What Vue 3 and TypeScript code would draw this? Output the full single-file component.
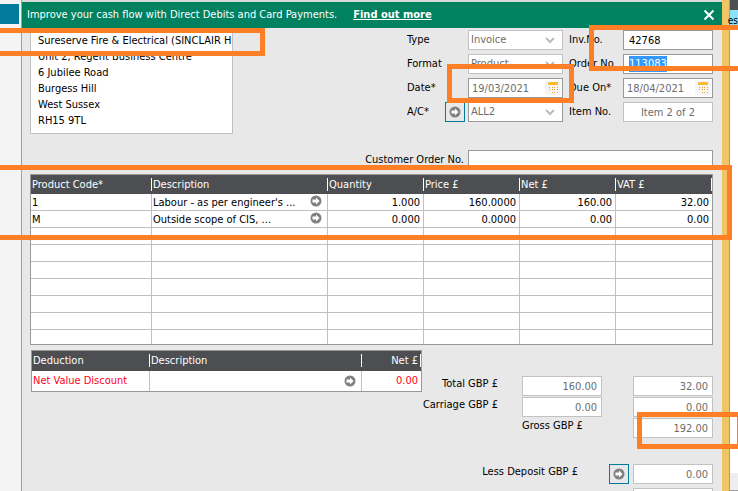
<script setup lang="ts">
import { ref } from 'vue'

interface LineItem {
  code: string
  description: string
  quantity: string
  price: string
  net: string
  vat: string
}

const company = ref('Sureserve Fire & Electrical (SINCLAIR HOUSE)')
const address = ref('Unit 2, Regent Business Centre\n6 Jubilee Road\nBurgess Hill\nWest Sussex\nRH15 9TL')
const docType = ref('Invoice')
const format = ref('Product')
const account = ref('ALL2')
const date = ref('19/03/2021')
const dueOn = ref('18/04/2021')
const invoiceNo = ref('42768')
const orderNo = ref('113083')
const customerOrderNo = ref('')

const lines: LineItem[] = [
  { code: '1', description: "Labour - as per engineer's ...", quantity: '1.000', price: '160.0000', net: '160.00', vat: '32.00' },
  { code: 'M', description: 'Outside scope of CIS, ...', quantity: '0.000', price: '0.0000', net: '0.00', vat: '0.00' },
]
const blankRows = 7
</script>

<template>
  <div class="window">
    <aside class="rail"><div class="rail-tab"></div></aside>

    <main class="invoice">
      <header class="banner">
        <span>Improve your cash flow with Direct Debits and Card Payments.</span>
        <a href="#">Find out more</a>
        <button class="close" type="button" aria-label="Close">
          <svg width="12" height="12" viewBox="0 0 12 12"><path d="M1.5 1.5 10.5 10.5M10.5 1.5 1.5 10.5" stroke="#fff" stroke-width="2" /></svg>
        </button>
      </header>

      <div class="body">
        <section class="details">
          <div class="address">
            <input v-model="company" aria-label="Customer name" />
            <textarea v-model="address" rows="5" aria-label="Customer address"></textarea>
          </div>

          <div class="fields">
            <label for="type">Type</label>
            <div class="pick">
              <select id="type" v-model="docType" class="box soft"><option>Invoice</option></select>
              <svg class="chevron" width="10" height="7" viewBox="0 0 10 7"><path d="M1 1 5 5 9 1" /></svg>
            </div>
            <label for="inv">Inv.No.</label>
            <input id="inv" v-model="invoiceNo" class="box" />

            <label for="format">Format</label>
            <div class="pick">
              <select id="format" v-model="format" class="box soft"><option>Product</option></select>
              <svg class="chevron" width="10" height="7" viewBox="0 0 10 7"><path d="M1 1 5 5 9 1" /></svg>
            </div>
            <label for="order">Order No</label>
            <div class="box order">
              <input id="order" v-model="orderNo" />
            </div>

            <label for="date">Date*</label>
            <div class="pick">
              <input id="date" v-model="date" class="box grey" />
              <svg class="calendar" width="16" height="14" viewBox="0 0 16 14">
                <rect width="16" height="14" fill="#f5f5f5" />
                <path d="M4 1h9v3H3V2z" fill="#fbbb2d" />
                <path d="M4 6h1v1H4zM7 6h1v1H7zM9 6h1v1H9zM12 6h1v1h-1zM4 8h1v1H4zM7 8h1v1H7zM9 8h1v1H9zM12 8h1v1h-1zM7 11h1v1H7zM9 11h1v1H9zM12 11h1v1h-1z" fill="#f59a23" />
              </svg>
            </div>
            <label for="due">Due On*</label>
            <div class="pick">
              <input id="due" v-model="dueOn" class="box grey" />
              <svg class="calendar" width="16" height="14" viewBox="0 0 16 14">
                <rect width="16" height="14" fill="#f5f5f5" />
                <path d="M4 1h9v3H3V2z" fill="#fbbb2d" />
                <path d="M4 6h1v1H4zM7 6h1v1H7zM9 6h1v1H9zM12 6h1v1h-1zM4 8h1v1H4zM7 8h1v1H7zM9 8h1v1H9zM12 8h1v1h-1zM7 11h1v1H7zM9 11h1v1H9zM12 11h1v1h-1z" fill="#f59a23" />
              </svg>
            </div>

            <div class="account">
              <label for="account">A/C*</label>
              <button class="go" type="button" aria-label="Open account">
                <svg class="arrow" width="12" height="12" viewBox="0 0 12 12"><circle cx="6" cy="6" r="5.5" /><path d="M2.5 4.5H6V2.5L9.5 6 6 9.5V7.5H2.5z" /></svg>
              </button>
            </div>
            <div class="pick">
              <select id="account" v-model="account" class="box grey"><option>ALL2</option></select>
              <svg class="chevron" width="10" height="7" viewBox="0 0 10 7"><path d="M1 1 5 5 9 1" /></svg>
            </div>
            <label for="item">Item No.</label>
            <input id="item" class="box soft centered" value="Item 2 of 2" readonly />
          </div>
        </section>

        <div class="customer-order">
          <label for="customer-order">Customer Order No.</label>
          <input id="customer-order" v-model="customerOrderNo" class="box" />
        </div>

        <table class="grid items">
          <colgroup>
            <col class="w-code" /><col /><col class="w-num" /><col class="w-num" /><col class="w-num" /><col class="w-num" />
          </colgroup>
          <thead>
            <tr><th>Product Code*</th><th>Description</th><th>Quantity</th><th>Price £</th><th>Net £</th><th>VAT £</th></tr>
          </thead>
          <tbody>
            <tr v-for="line in lines" :key="line.code">
              <td>{{ line.code }}</td>
              <td>
                <div class="desc">
                  <span>{{ line.description }}</span>
                  <svg class="arrow" width="12" height="12" viewBox="0 0 12 12"><circle cx="6" cy="6" r="5.5" /><path d="M2.5 4.5H6V2.5L9.5 6 6 9.5V7.5H2.5z" /></svg>
                </div>
              </td>
              <td class="num">{{ line.quantity }}</td>
              <td class="num">{{ line.price }}</td>
              <td class="num">{{ line.net }}</td>
              <td class="num">{{ line.vat }}</td>
            </tr>
            <tr v-for="n in blankRows" :key="n"><td v-for="c in 6" :key="c"></td></tr>
          </tbody>
        </table>

        <section class="summary">
          <table class="grid deductions">
            <colgroup><col class="w-ded" /><col /><col class="w-net" /></colgroup>
            <thead>
              <tr><th>Deduction</th><th>Description</th><th class="num">Net £</th></tr>
            </thead>
            <tbody>
              <tr>
                <td>Net Value Discount</td>
                <td>
                  <div class="desc end">
                    <svg class="arrow" width="12" height="12" viewBox="0 0 12 12"><circle cx="6" cy="6" r="5.5" /><path d="M2.5 4.5H6V2.5L9.5 6 6 9.5V7.5H2.5z" /></svg>
                  </div>
                </td>
                <td class="num">0.00</td>
              </tr>
            </tbody>
          </table>

          <div class="totals">
            <label for="total-net">Total GBP £</label>
            <input id="total-net" class="box soft amount" value="160.00" readonly />
            <input class="box soft amount last" aria-label="Total VAT" value="32.00" readonly />

            <label for="carriage-net">Carriage GBP £</label>
            <input id="carriage-net" class="box soft amount" value="0.00" readonly />
            <input class="box soft amount last" aria-label="Carriage VAT" value="0.00" readonly />

            <label class="gross" for="gross">Gross GBP £</label>
            <input id="gross" class="box soft amount last" value="192.00" readonly />

            <label class="deposit" for="deposit">Less Deposit GBP £</label>
            <button class="go" type="button" aria-label="Open deposit">
              <svg class="arrow" width="12" height="12" viewBox="0 0 12 12"><circle cx="6" cy="6" r="5.5" /><path d="M2.5 4.5H6V2.5L9.5 6 6 9.5V7.5H2.5z" /></svg>
            </button>
            <input id="deposit" class="box soft amount last" value="0.00" readonly />
            <input class="box soft amount last due" aria-label="Amount due" readonly />
          </div>
        </section>
      </div>
    </main>

    <div class="frame-edge"></div>
    <aside class="behind">
      <div class="behind-head"></div>
      <div class="behind-row">es</div>
      <div class="behind-scroll"></div>
    </aside>

    <div class="mark mark-name"></div>
    <div class="mark mark-date"></div>
    <div class="mark mark-numbers"></div>
    <div class="mark mark-lines"></div>
    <div class="mark mark-gross"></div>
  </div>
</template>

<style>
body {
  margin: 0;
}
</style>

<style scoped>
* {
  box-sizing: border-box;
}

.window {
  position: relative;
  display: grid;
  grid-template-columns: 22px 1fr 8px 8px;
  height: 100vh;
  overflow: hidden;
  background: #e8e8e8;
  color: #000;
  font-family: 'DejaVu Sans Condensed', 'Noto Sans', sans-serif;
  font-size: 11px;
  line-height: 16px;
}

input,
select,
textarea,
button {
  font: inherit;
  color: inherit;
  margin: 0;
  border-radius: 0;
  outline: 0;
}

.rail {
  padding-top: 4px;
  border-right: 1px solid #a0a0a0;
  background: #f4f4f4;
}

.rail-tab {
  width: 19px;
  height: 20px;
  background: #007b9e;
}

.invoice {
  min-width: 0;
  overflow: hidden;
  border-top: 2px solid #d8d8d8;
}

.banner {
  display: flex;
  align-items: center;
  gap: 16px;
  height: 26px;
  padding: 0 7px 0 5px;
  background: #00815f;
  color: #fff;
}

.banner a {
  color: #fff;
  font-weight: bold;
}

.close {
  display: flex;
  margin-left: auto;
  padding: 0;
  border: 0;
  background: none;
}

.body {
  padding: 2px 9px 0 8px;
}

.details {
  display: flex;
  justify-content: space-between;
}

.address {
  width: 203px;
  height: 104px;
  padding: 2px 1px;
  border: 1px solid #c0c0c0;
  background: #fff;
}

.address input,
.address textarea {
  display: block;
  width: 100%;
  padding: 0 0 0 6px;
  border: 0;
  background: none;
  resize: none;
  overflow: hidden;
}

.address input {
  height: 16px;
}

.fields {
  display: grid;
  grid-template-columns: 55px 95px 48px 90px;
  grid-auto-rows: 20px;
  column-gap: 6px;
  row-gap: 4px;
  align-items: center;
}

.box {
  width: 100%;
  height: 20px;
  padding: 0 5px;
  border: 1px solid #989898;
  background: #fff;
}

select.box {
  appearance: none;
  padding: 0 2px;
}

.soft {
  border-color: #c2c2c2;
  color: #6d6d6d;
}

.grey {
  padding: 0 3px;
  color: #6d6d6d;
}

.centered {
  text-align: center;
}

.pick {
  display: grid;
  grid-template-columns: 1fr 18px;
  align-items: center;
}

.pick > .box {
  grid-area: 1 / 1 / 2 / 3;
}

.chevron {
  grid-area: 1 / 2;
  fill: none;
  stroke: #bdbdbd;
  stroke-width: 2;
}

.calendar {
  grid-area: 1 / 2;
}

.order {
  padding: 0 5px;
}

.order input {
  display: block;
  width: 38px;
  height: 16px;
  margin-top: 1px;
  padding: 0;
  border: 0;
  background: #3399ff;
  color: #fff;
}

.account {
  display: flex;
  align-items: center;
  justify-content: space-between;
  margin-right: -3px;
}

.go {
  display: flex;
  align-items: center;
  justify-content: center;
  width: 20px;
  height: 20px;
  padding: 0;
  border: 1px solid #007b9e;
  background: #e8e8e8;
}

.arrow {
  flex: none;
  fill: #fff;
}

.arrow circle {
  fill: #808080;
}

.customer-order {
  display: flex;
  align-items: center;
  justify-content: flex-end;
  gap: 4px;
  margin: 16px 0 4px;
}

.customer-order .box {
  width: 245px;
}

.grid {
  table-layout: fixed;
  border-collapse: separate;
  border-spacing: 0;
  border: 1px solid #989898;
  background: #fff;
}

.grid th {
  padding: 0 1px;
  background: linear-gradient(#fff, #fff) right 3px / 1px 13px no-repeat #4d4e52;
  color: #fff;
  font-weight: normal;
  text-align: left;
}

.grid th,
.grid td {
  overflow: hidden;
  white-space: nowrap;
}

.grid td {
  padding: 0 2px 0 1px;
  border-right: 1px solid #c0c0c0;
}

.grid .num {
  padding-right: 3px;
  text-align: right;
}

.items {
  width: 100%;
}

.items th {
  height: 19px;
}

.items td {
  height: 17px;
  padding-top: 2px;
  border-bottom: 1px solid #c0c0c0;
  line-height: 14px;
}

.items tr:last-child td {
  height: 14px;
  padding-top: 0;
  border-bottom: 0;
}

.items td:last-child,
.deductions td:last-child {
  border-right: 0;
}

.w-code {
  width: 121px;
}

.w-num {
  width: 96px;
}

.desc {
  display: flex;
  align-items: center;
  justify-content: space-between;
  height: 14px;
  padding-right: 3px;
}

.desc .arrow {
  margin-bottom: 5px;
}

.end {
  justify-content: flex-end;
}

.end .arrow {
  margin-bottom: 0;
}

.summary {
  display: flex;
  justify-content: space-between;
  align-items: flex-start;
  padding: 5px 0 0 1px;
}

.deductions {
  width: 391px;
}

.deductions th,
.deductions td {
  height: 20px;
}

.deductions td {
  color: #ff0022;
}

.w-ded {
  width: 118px;
}

.w-net {
  width: 59px;
}

.totals {
  display: grid;
  grid-template-columns: 100px 80px 31px 80px;
  grid-auto-rows: 20px;
  row-gap: 1px;
  margin-top: 26px;
}

.totals label {
  padding-right: 24px;
  text-align: right;
}

.totals .gross {
  grid-column: 2;
  padding: 0;
  text-align: left;
}

.totals .deposit {
  grid-column: 1 / 3;
}

.totals .last {
  grid-column: 4;
}

.amount {
  padding: 0 4px;
  text-align: right;
}

.totals .deposit,
.totals .deposit ~ * {
  margin-top: 25px;
}

.totals .go {
  margin-left: 7px;
}

.totals .due {
  margin-top: 28px;
}

.frame-edge {
  border-right: 1px solid #b89a58;
  background: #f0c566;
}

.behind {
  display: flex;
  flex-direction: column;
  background: #fff;
}

.behind-head {
  height: 10px;
  background: #4d4e52;
}

.behind-row {
  display: flex;
  justify-content: flex-end;
  height: 20px;
  background: #8ce0fc;
  font-size: 10px;
  line-height: 22px;
}

.behind-scroll {
  height: 18px;
  margin-top: auto;
  border-bottom: 1px solid #a0a0a0;
  background: #eee;
}

.mark {
  position: absolute;
  border: 5px solid #ff7f27;
}

.mark-name {
  left: -10px;
  top: 28px;
  width: 275px;
  height: 28px;
}

.mark-date {
  left: 447px;
  top: 64px;
  width: 127px;
  height: 39px;
}

.mark-numbers {
  left: 589px;
  top: 25px;
  width: 160px;
  height: 46px;
}

.mark-lines {
  left: -10px;
  top: 165px;
  width: 742px;
  height: 75px;
}

.mark-gross {
  left: 637px;
  top: 412px;
  width: 105px;
  height: 37px;
}
</style>
